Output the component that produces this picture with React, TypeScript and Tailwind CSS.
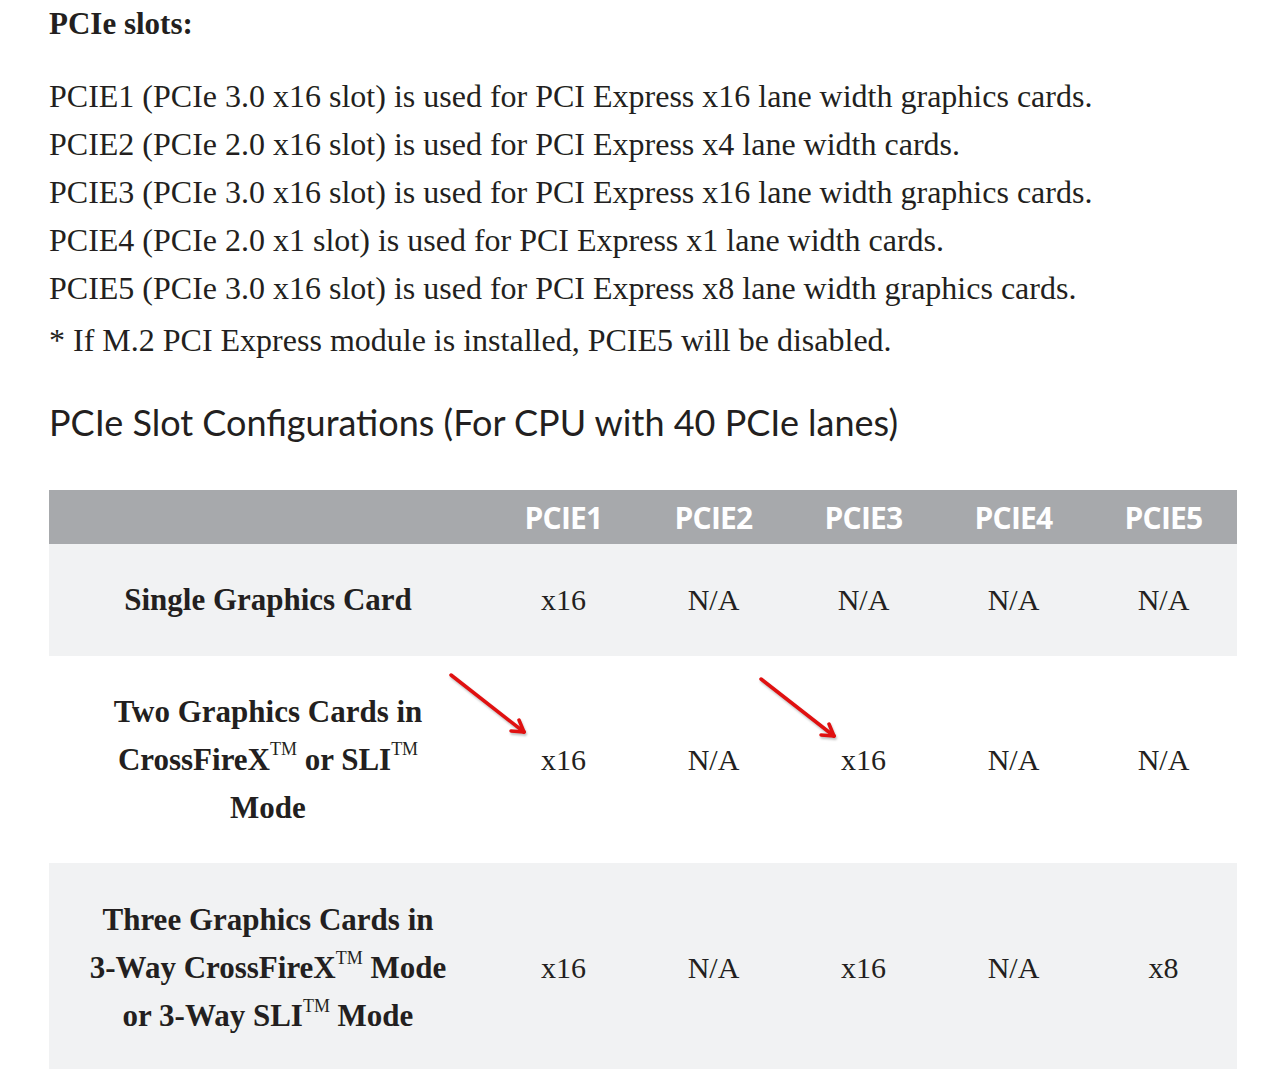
const serif = "font-['Liberation_Serif',serif]"

const slots = [
  'PCIE1 (PCIe 3.0 x16 slot) is used for PCI Express x16 lane width graphics cards.',
  'PCIE2 (PCIe 2.0 x16 slot) is used for PCI Express x4 lane width cards.',
  'PCIE3 (PCIe 3.0 x16 slot) is used for PCI Express x16 lane width graphics cards.',
  'PCIE4 (PCIe 2.0 x1 slot) is used for PCI Express x1 lane width cards.',
  'PCIE5 (PCIe 3.0 x16 slot) is used for PCI Express x8 lane width graphics cards.',
]

function TM() {
  return <sup className="relative -top-[0.8em] text-[0.58em] font-normal">TM</sup>
}

function Arrow() {
  return (
    <svg width="82" height="66" viewBox="0 0 82 66" className="drop-shadow-[1px_2px_1px_rgba(0,0,0,0.25)]">
      <g stroke="#e01010" strokeWidth="3.5" strokeLinecap="round" fill="none">
        <path d="M3 3 L76 60" />
        <path d="M76 60 L63 59" />
        <path d="M76 60 L71 48" />
      </g>
    </svg>
  )
}

type Row = { label: React.ReactNode; cells: string[]; h: string; bg: string; arrows?: boolean }

const rows: Row[] = [
  { label: 'Single Graphics Card', cells: ['x16', 'N/A', 'N/A', 'N/A', 'N/A'], h: 'h-[112px]', bg: 'bg-[#f1f2f3]' },
  {
    label: (
      <>
        Two Graphics Cards in
        <br />
        CrossFireX<TM /> or SLI<TM />
        <br />
        Mode
      </>
    ),
    cells: ['x16', 'N/A', 'x16', 'N/A', 'N/A'],
    h: 'h-[207px]',
    bg: 'bg-white',
    arrows: true,
  },
  {
    label: (
      <>
        Three Graphics Cards in
        <br />
        3-Way CrossFireX<TM /> Mode
        <br />
        or 3-Way SLI<TM /> Mode
      </>
    ),
    cells: ['x16', 'N/A', 'x16', 'N/A', 'x8'],
    h: 'h-[210px]',
    bg: 'bg-[#f1f2f3]',
  },
]

export default function App() {
  return (
    <div className={`min-h-screen bg-white pl-[49px] text-[#231f20] ${serif}`}>
      <h2 className="text-[31px] font-bold leading-[48px]">PCIe slots:</h2>
      <div className="mt-[24px] text-[32px] leading-[48px]">
        {slots.map((s) => (
          <p key={s}>{s}</p>
        ))}
        <p className="mt-[4px]">* If M.2 PCI Express module is installed, PCIE5 will be disabled.</p>
      </div>
      <h1 className="mt-[34px] font-['Lato',sans-serif] text-[36px] leading-[48px]">
        PCIe Slot Configurations (For CPU with 40 PCIe lanes)
      </h1>

      <div className="mt-[44px] w-[1188px]">
        <div className="grid h-[54px] grid-cols-[438px_repeat(5,150px)] items-center bg-[#a7a9ac] font-['Open_Sans',sans-serif] text-[30px] font-bold text-white">
          <div />
          {['PCIE1', 'PCIE2', 'PCIE3', 'PCIE4', 'PCIE5'].map((p) => (
            <div key={p} className="pl-[3px] text-center tracking-[-0.8px]">
              {p}
            </div>
          ))}
        </div>
        {rows.map((r, i) => (
          <div
            key={i}
            className={`relative grid grid-cols-[438px_repeat(5,150px)] items-center text-[30px] leading-[48px] ${r.h} ${r.bg}`}
          >
            <div className="text-center text-[31px] font-bold">{r.label}</div>
            {r.cells.map((c, j) => (
              <div key={j} className="pl-[3px] text-center">
                {c}
              </div>
            ))}
            {r.arrows && (
              <>
                <div className="absolute left-[399px] top-[16px]">
                  <Arrow />
                </div>
                <div className="absolute left-[709px] top-[20px]">
                  <Arrow />
                </div>
              </>
            )}
          </div>
        ))}
      </div>
    </div>
  )
}
